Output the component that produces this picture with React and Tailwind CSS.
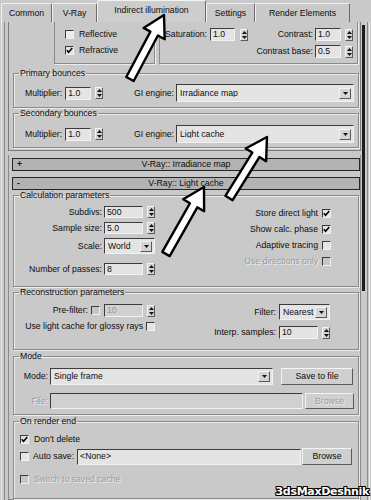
import React from "react";

const sunken =
  "border border-t-[#3c3c3c] border-l-[#3c3c3c] border-b-[#f2f2f2] border-r-[#f2f2f2]";
const raised =
  "border border-t-[#f4f4f4] border-l-[#f4f4f4] border-b-[#5a5a5a] border-r-[#5a5a5a]";
const dim = "text-[#9a9a9a] [text-shadow:1px_1px_0_#f0f0f0]";

function Field({ value, className = "", h = "h-[13px]", disabled = false }) {
  return (
    <div
      className={`${h} flex items-center pl-[2px] ${sunken} ${
        disabled ? "bg-[#d0d0d0] text-[#9a9a9a]" : "bg-[#e4e4e4]"
      } ${className}`}
    >
      {value}
    </div>
  );
}

function Spinner({ disabled = false }) {
  const c = disabled ? "#8c8c8c" : "#111";
  return (
    <div
      className={`w-[8px] h-[12px] shrink-0 flex flex-col items-center justify-center gap-[2px] bg-[#d4d4d4] ${raised}`}
    >
      <svg width="5" height="3" viewBox="0 0 5 3">
        <path d="M2.5 0L5 3H0z" fill={c} />
      </svg>
      <svg width="5" height="3" viewBox="0 0 5 3">
        <path d="M0 0h5L2.5 3z" fill={c} />
      </svg>
    </div>
  );
}

function Check({ checked = false, disabled = false, light = false }) {
  return (
    <div
      className={`w-[9px] h-[9px] shrink-0 flex items-center justify-center ${sunken} ${
        disabled ? "bg-[#c6c6c6]" : light ? "bg-[#ededed]" : "bg-[#e4e4e4]"
      }`}
    >
      {checked && (
        <svg width="7" height="7" viewBox="0 0 7 7">
          <path d="M0.8 3.2L2.6 5.3L6.3 1" stroke="#000" strokeWidth="1.5" fill="none" />
        </svg>
      )}
    </div>
  );
}

function Select({ value, className = "" }) {
  return (
    <div className={`flex items-center ${sunken} bg-[#e4e4e4] ${className}`}>
      <span className="flex-1 pl-[3px] truncate">{value}</span>
      <div
        className={`w-[12px] h-[11px] mr-[2px] flex items-center justify-center bg-[#d4d4d4] ${raised}`}
      >
        <svg width="5" height="3" viewBox="0 0 5 3">
          <path d="M0 0h5L2.5 3z" fill="#111" />
        </svg>
      </div>
    </div>
  );
}

function Button({ label, className = "", disabled = false }) {
  return (
    <div
      className={`flex items-center justify-center bg-[#cfcfcf] ${raised} ${
        disabled ? dim : ""
      } ${className}`}
    >
      {label}
    </div>
  );
}

function Group({ title, className = "", children }) {
  return (
    <fieldset
      className={`ml-[4px] w-[346px] border border-[#8a8a8a] shadow-[1px_1px_0_#ececec,inset_1px_1px_0_#ececec] ${className}`}
    >
      <legend className="ml-[5px] px-[1px] leading-[11px]">{title}</legend>
      {children}
    </fieldset>
  );
}

function RolloutBar({ sign, title }) {
  return (
    <div className="ml-[3px] w-[348px] h-[13px] grid grid-cols-[16px_1fr_16px] items-center bg-[#b3b3b3] border border-[#262626]">
      <span className="pl-[4px] font-bold">{sign}</span>
      <span className="text-center">{title}</span>
      <span />
    </div>
  );
}

function arrow(x1, y1, x2, y2) {
  const len = Math.hypot(x2 - x1, y2 - y1);
  const dx = (x2 - x1) / len;
  const dy = (y2 - y1) / len;
  const nx = -dy;
  const ny = dx;
  const s = 4.2;
  const h = 12;
  const L = 21;
  const bx = x2 - dx * L;
  const by = y2 - dy * L;
  const pts = [
    [x1 + nx * s, y1 + ny * s],
    [bx + nx * s, by + ny * s],
    [bx + nx * h, by + ny * h],
    [x2, y2],
    [bx - nx * h, by - ny * h],
    [bx - nx * s, by - ny * s],
    [x1 - nx * s, y1 - ny * s],
  ];
  return pts.map((p) => p.map((v) => v.toFixed(1)).join(",")).join(" ");
}

export default function App() {
  const tabs = [
    { label: "Common", w: "w-[51px] h-[19px]" },
    { label: "V-Ray", w: "w-[45px] h-[19px]" },
    { label: "Indirect illumination", w: "w-[109px] h-[22px]", active: true },
    { label: "Settings", w: "w-[49px] h-[19px]" },
    { label: "Render Elements", w: "w-[95px] h-[19px]" },
  ];

  return (
    <div className="relative w-[371px] h-[500px] overflow-hidden bg-[#c9c9c9] text-[#0d0d0d] text-[8.7px] leading-none font-['Liberation_Sans',Arial,sans-serif]">
      {/* Tabs */}
      <div className="flex items-end h-[22px] pl-[1px]">
        {tabs.map((t) => (
          <div
            key={t.label}
            className={`${t.w} flex items-center justify-center border-t border-l border-r border-t-[#f2f2f2] border-l-[#f2f2f2] border-r-[#6a6a6a] rounded-t-[2px] ${
              t.active ? "bg-[#cdcdcd] pb-[3px]" : ""
            }`}
          >
            {t.label}
          </div>
        ))}
      </div>

      {/* Body */}
      <div className="flex h-[478px]">
        <div className="w-[8px] flex">
          <div className="ml-[1px] w-[1px] bg-[#eeeeee]" />
          <div className="ml-[2px] w-[1px] bg-[#8a8a8a]" />
        </div>

        <div className="w-[353px] flex flex-col">
          {/* GI rollout (scrolled) */}
          <div className="h-[129px] border-l border-r border-b border-[#7a7a7a] pb-[2px]">
            <div className="flex h-[42px]">
              <div className="w-[45px]" />
              <div className="w-[101px] border-l border-r border-b border-[#8a8a8a] shadow-[1px_1px_0_#ececec] pt-[4px] pl-[10px]">
                <div className="h-[16px] flex items-center gap-[5px]">
                  <Check light />
                  <span>Reflective</span>
                </div>
                <div className="h-[16px] flex items-center gap-[5px]">
                  <Check checked />
                  <span>Refractive</span>
                </div>
              </div>
              <div className="ml-[4px] w-[199px] border-l border-r border-b border-[#8a8a8a] shadow-[1px_1px_0_#ececec] pt-[6px] pr-[4px]">
                <div className="h-[13px] flex items-center">
                  <span className="ml-[5px]">Saturation:</span>
                  <Field value="1.0" className="ml-[3px] w-[25px]" />
                  <div className="ml-[5px]">
                    <Spinner />
                  </div>
                  <span className="ml-auto">Contrast:</span>
                  <Field value="1.0" className="ml-[2px] w-[26px]" />
                  <div className="ml-[4px]">
                    <Spinner />
                  </div>
                </div>
                <div className="mt-[4px] h-[13px] flex items-center justify-end">
                  <span>Contrast base:</span>
                  <Field value="0.5" className="ml-[2px] w-[26px]" />
                  <div className="ml-[4px]">
                    <Spinner />
                  </div>
                </div>
              </div>
            </div>

            <Group title="Primary bounces" className="mt-[4px] h-[40px]">
              <div className="mt-[5px] h-[18px] flex items-center pl-[11px] pr-[4px]">
                <span>Multiplier:</span>
                <Field value="1.0" className="ml-[3px] w-[26px]" />
                <div className="ml-[4px]">
                  <Spinner />
                </div>
                <span className="ml-auto">GI engine:</span>
                <Select value="Irradiance map" className="ml-[2px] w-[178px] h-[18px]" />
              </div>
            </Group>

            <Group title="Secondary bounces" className="h-[40px]">
              <div className="mt-[6px] h-[18px] flex items-center pl-[11px] pr-[4px]">
                <span>Multiplier:</span>
                <Field value="1.0" className="ml-[3px] w-[26px]" />
                <div className="ml-[4px]">
                  <Spinner />
                </div>
                <span className="ml-auto">GI engine:</span>
                <Select value="Light cache" className="ml-[2px] w-[178px] h-[18px]" />
              </div>
            </Group>
          </div>

          {/* Irradiance map (collapsed) */}
          <div className="mt-[4px] h-[20px] border-l border-r border-[#8a8a8a] pt-[3px]">
            <RolloutBar sign="+" title="V-Ray:: Irradiance map" />
          </div>

          {/* Light cache */}
          <div className="flex-1 border-l border-r border-b border-[#8a8a8a] pt-[2px]">
            <RolloutBar sign="-" title="V-Ray:: Light cache" />

            <Group title="Calculation parameters" className="h-[97px]">
              <div className="flex">
                <div className="flex flex-col pt-[5px]">
                  <div className="h-[12px] flex items-center">
                    <span className="w-[88px] text-right">Subdivs:</span>
                    <Field value="500" h="h-[12px]" className="ml-[2px] w-[39px]" />
                    <div className="ml-[4px]">
                      <Spinner />
                    </div>
                  </div>
                  <div className="mt-[4px] h-[12px] flex items-center">
                    <span className="w-[88px] text-right">Sample size:</span>
                    <Field value="5.0" h="h-[12px]" className="ml-[2px] w-[39px]" />
                    <div className="ml-[4px]">
                      <Spinner />
                    </div>
                  </div>
                  <div className="mt-[4px] h-[16px] flex items-center">
                    <span className="w-[88px] text-right">Scale:</span>
                    <Select value="World" className="ml-[2px] w-[51px] h-[16px]" />
                  </div>
                  <div className="mt-[9px] h-[12px] flex items-center">
                    <span className="w-[88px] text-right">Number of passes:</span>
                    <Field value="8" h="h-[12px]" className="ml-[2px] w-[39px]" />
                    <div className="ml-[4px]">
                      <Spinner />
                    </div>
                  </div>
                </div>
                <div className="ml-auto mr-[27px] pt-[4px] flex flex-col items-end">
                  <div className="h-[16px] flex items-center gap-[4px]">
                    <span>Store direct light</span>
                    <Check checked />
                  </div>
                  <div className="h-[16px] flex items-center gap-[4px]">
                    <span>Show calc. phase</span>
                    <Check checked />
                  </div>
                  <div className="h-[16px] flex items-center gap-[4px]">
                    <span>Adaptive tracing</span>
                    <Check />
                  </div>
                  <div className="h-[16px] flex items-center gap-[4px]">
                    <span className={dim}>Use directions only</span>
                    <Check disabled />
                  </div>
                </div>
              </div>
            </Group>

            <Group title="Reconstruction parameters" className="h-[63px]">
              <div className="flex">
                <div className="w-[141px] flex flex-col pt-[6px]">
                  <div className="h-[13px] flex items-center">
                    <span className="w-[74px] text-right">Pre-filter:</span>
                    <div className="ml-[3px]">
                      <Check disabled />
                    </div>
                    <Field value="10" disabled className="ml-[4px] w-[39px]" />
                    <div className="ml-[4px]">
                      <Spinner />
                    </div>
                  </div>
                  <div className="mt-[3px] h-[13px] flex items-center justify-end gap-[3px]">
                    <span>Use light cache for glossy rays</span>
                    <Check />
                  </div>
                </div>
                <div className="ml-auto mr-[28px] pt-[6px] flex flex-col items-end">
                  <div className="h-[16px] flex items-center">
                    <span>Filter:</span>
                    <Select value="Nearest" className="ml-[3px] w-[51px] h-[16px]" />
                  </div>
                  <div className="mt-[6px] h-[13px] flex items-center">
                    <span>Interp. samples:</span>
                    <Field value="10" className="ml-[3px] w-[39px]" />
                    <div className="ml-[4px]">
                      <Spinner />
                    </div>
                  </div>
                </div>
              </div>
            </Group>

            <Group title="Mode" className="mt-[1px] h-[64px]">
              <div className="mt-[6px] h-[17px] flex items-center">
                <span className="w-[34px] text-right">Mode:</span>
                <Select value="Single frame" className="ml-[2px] w-[223px] h-[17px]" />
                <Button label="Save to file" className="ml-[8px] w-[72px] h-[17px]" />
              </div>
              <div className="mt-[8px] h-[16px] flex items-center">
                <span className={`w-[34px] text-right ${dim}`}>File:</span>
                <Field value="" disabled h="h-[16px]" className="ml-[2px] w-[253px]" />
                <Button label="Browse" disabled className="ml-[2px] w-[49px] h-[16px]" />
              </div>
            </Group>

            <Group title="On render end" className="mt-[1px] h-[83px]">
              <div className="mt-[6px] h-[13px] flex items-center pl-[6px] gap-[5px]">
                <Check checked />
                <span>Don't delete</span>
              </div>
              <div className="mt-[2px] h-[17px] flex items-center pl-[6px]">
                <Check />
                <span className="ml-[4px]">Auto save:</span>
                <Field value="<None>" h="h-[16px]" className="ml-[3px] w-[224px]" />
                <Button label="Browse" className="ml-[1px] w-[50px] h-[17px]" />
              </div>
              <div className="mt-[8px] h-[13px] flex items-center pl-[6px] gap-[5px]">
                <Check disabled />
                <span className={dim}>Switch to saved cache</span>
              </div>
            </Group>
          </div>
        </div>

        {/* right edge / scrollbar */}
        <div className="w-[10px] flex">
          <div className="ml-[1px] w-[3px] h-[266px] mt-[3px] bg-[#1c1c1c]" />
          <div className="ml-[2px] w-[1px] bg-[#8a8a8a]" />
          <div className="ml-[1px] w-[1px] bg-[#eeeeee]" />
        </div>
      </div>

      {/* Annotation arrows */}
      <svg className="absolute inset-0 pointer-events-none" width="371" height="500">
        {[
          [130, 79, 164, 15],
          [229, 198, 267, 137],
          [166, 254, 204, 187],
        ].map((a, i) => (
          <polygon
            key={i}
            points={arrow(...a)}
            fill="#ffffff"
            stroke="#000000"
            strokeWidth="2.4"
            strokeLinejoin="round"
          />
        ))}
      </svg>

      {/* Watermark */}
      <div className="absolute right-[2px] bottom-[3px] text-white font-bold text-[11px] leading-none font-['DejaVu_Sans',sans-serif] tracking-[-0.3px] [text-shadow:1px_0_0_#000,-1px_0_0_#000,0_1px_0_#000,0_-1px_0_#000,1px_1px_0_#000,-1px_-1px_0_#000,1px_-1px_0_#000,-1px_1px_0_#000]">
        3dsMaxDeshnik
      </div>
    </div>
  );
}
